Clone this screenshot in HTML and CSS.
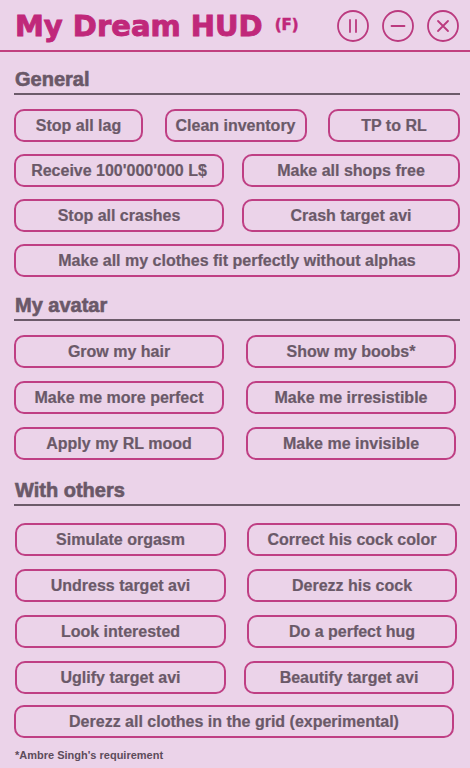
FILE: index.html
```html
<!DOCTYPE html>
<html lang="en">
<head>
<meta charset="utf-8">
<title>My Dream HUD</title>
<link rel="stylesheet" href="styles.css">
</head>
<body>
<div class="hud">
  <header class="bar">
    <h1 class="title">My Dream HUD<span class="tag">(F)</span></h1>
    <div class="controls">
      <svg class="ctl" viewBox="0 0 32 32" width="32" height="32" aria-label="Pause">
        <circle cx="16" cy="16" r="15" fill="none" stroke="currentColor" stroke-width="1.8"/>
        <path d="M13 10v12M19 10v12" stroke="currentColor" stroke-width="1.8" stroke-linecap="round"/>
      </svg>
      <svg class="ctl" viewBox="0 0 32 32" width="32" height="32" aria-label="Minimize">
        <circle cx="16" cy="16" r="15" fill="none" stroke="currentColor" stroke-width="1.8"/>
        <path d="M9.5 16h13" stroke="currentColor" stroke-width="1.8" stroke-linecap="round"/>
      </svg>
      <svg class="ctl" viewBox="0 0 32 32" width="32" height="32" aria-label="Close">
        <circle cx="16" cy="16" r="15" fill="none" stroke="currentColor" stroke-width="1.8"/>
        <path d="M11 11l10 10M21 11l-10 10" stroke="currentColor" stroke-width="1.8" stroke-linecap="round"/>
      </svg>
    </div>
  </header>

  <main class="content">
    <section class="sec sec-general">
      <h2 class="sec-title">General</h2>
      <div class="rows rows-general">
        <div class="row row-spread">
          <button class="btn w129">Stop all lag</button>
          <button class="btn w142">Clean inventory</button>
          <button class="btn w132">TP to RL</button>
        </div>
        <div class="row row-spread">
          <button class="btn w210">Receive 100'000'000 L$</button>
          <button class="btn w218">Make all shops free</button>
        </div>
        <div class="row row-spread">
          <button class="btn w210">Stop all crashes</button>
          <button class="btn w218">Crash target avi</button>
        </div>
        <div class="row">
          <button class="btn wfull">Make all my clothes fit perfectly without alphas</button>
        </div>
      </div>
    </section>

    <section class="sec sec-avatar">
      <h2 class="sec-title">My avatar</h2>
      <div class="rows rows-avatar">
        <div class="row row-pair">
          <button class="btn w210">Grow my hair</button>
          <button class="btn w210 nudge">Show my boobs*</button>
        </div>
        <div class="row row-pair">
          <button class="btn w210">Make me more perfect</button>
          <button class="btn w210">Make me irresistible</button>
        </div>
        <div class="row row-pair">
          <button class="btn w210">Apply my RL mood</button>
          <button class="btn w210">Make me invisible</button>
        </div>
      </div>
    </section>

    <section class="sec sec-others">
      <h2 class="sec-title">With others</h2>
      <div class="rows rows-others">
        <div class="row row-pair shift">
          <button class="btn w211">Simulate orgasm</button>
          <button class="btn w210">Correct his cock color</button>
        </div>
        <div class="row row-pair shift">
          <button class="btn w211">Undress target avi</button>
          <button class="btn w210">Derezz his cock</button>
        </div>
        <div class="row row-pair shift">
          <button class="btn w211">Look interested</button>
          <button class="btn w210">Do a perfect hug</button>
        </div>
        <div class="row row-pair shift tight-gap">
          <button class="btn w211">Uglify target avi</button>
          <button class="btn w210">Beautify target avi</button>
        </div>
        <div class="row row-last">
          <button class="btn w440">Derezz all clothes in the grid (experimental)</button>
        </div>
      </div>
    </section>

    <p class="note">*Ambre Singh's requirement</p>
  </main>
</div>
</body>
</html>
```

FILE: styles.css
```css
html, body {
  margin: 0;
  padding: 0;
  background: #ebd3e9;
}

.hud {
  width: 470px;
  height: 768px;
  background: #ebd3e9;
  font-family: "Liberation Sans", Arial, sans-serif;
  overflow: hidden;
}

/* ---------- header ---------- */
.bar {
  height: 52px;
  box-sizing: border-box;
  padding: 2px 11px 0 15px;
  border-bottom: 2px solid #c1407f;
  display: flex;
  align-items: center;
  justify-content: space-between;
}

.title {
  margin: 0;
  font-family: "DejaVu Sans", sans-serif;
  font-weight: bold;
  font-size: 29px;
  color: #c0287a;
  -webkit-text-stroke: 0.9px #c0287a;
  white-space: nowrap;
}

.tag {
  font-size: 15px;
  margin-left: 12px;
  vertical-align: 6px;
  -webkit-text-stroke: 0.5px #c0287a;
}

.controls {
  display: flex;
  align-items: center;
  gap: 13px;
  color: #bb3a7f;
}

.ctl {
  display: block;
}

/* ---------- content ---------- */
.content {
  padding: 0 10px 0 14px;
}

.sec-title {
  margin: 0;
  padding: 0 0 3px 1px;
  line-height: 22px;
  font-size: 20px;
  font-weight: bold;
  color: #6a5868;
  -webkit-text-stroke: 0.6px #6a5868;
  border-bottom: 2px solid #6c5b6a;
}

.sec-general { padding-top: 16px; }
.sec-avatar  { padding-top: 17px; }
.sec-others  { padding-top: 19px; }

.rows {
  display: flex;
  flex-direction: column;
}

.rows-general { margin-top: 14px; gap: 12px; }
.rows-avatar  { margin-top: 14px; gap: 13px; }
.rows-others  { margin-top: 17px; gap: 13px; }

.row {
  display: flex;
}

.row-spread {
  justify-content: space-between;
}

.row-pair {
  gap: 22px;
}

.row-pair.shift {
  padding-left: 1px;
  gap: 21px;
}

.row-pair.tight-gap {
  gap: 18px;
}

.row-last {
  margin-top: -2px;
}

.nudge {
  margin-left: 1px;
}

/* ---------- buttons ---------- */
.btn {
  height: 33px;
  box-sizing: border-box;
  margin: 0;
  padding: 0;
  border: 2.5px solid #bf3f84;
  border-radius: 10px;
  background: transparent;
  font-family: "Liberation Sans", Arial, sans-serif;
  font-weight: bold;
  font-size: 16px;
  color: #6a5968;
  -webkit-text-stroke: 0.2px #6a5968;
  display: flex;
  align-items: center;
  justify-content: center;
  white-space: nowrap;
}

.w129 { width: 129px; }
.w132 { width: 132px; }
.w142 { width: 142px; }
.w210 { width: 210px; }
.w211 { width: 211px; }
.w218 { width: 218px; }
.w440 { width: 440px; }
.wfull { width: 100%; }

/* ---------- footnote ---------- */
.note {
  margin: 11px 0 0 1px;
  font-size: 11px;
  line-height: 13px;
  font-weight: bold;
  color: #5d4c5b;
}
```
